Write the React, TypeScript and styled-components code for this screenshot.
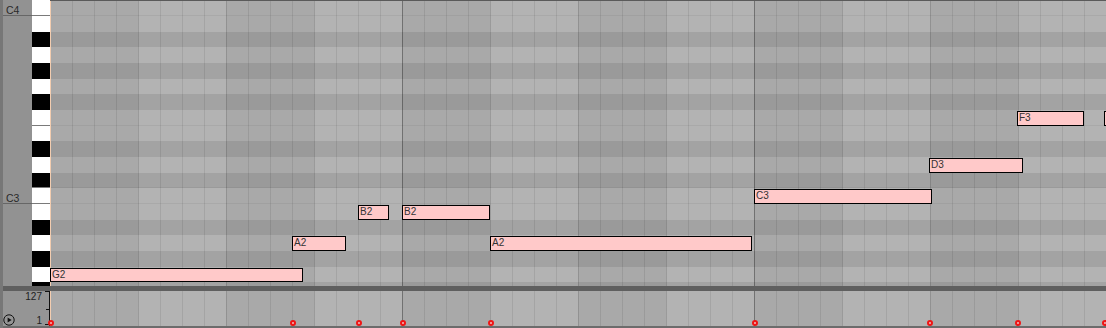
import React from "react";
import styled, { createGlobalStyle, css } from "styled-components";

const GlobalStyle = createGlobalStyle`
  html, body {
    margin: 0;
    padding: 0;
    background: #929292;
  }
  body {
    font-family: "Liberation Sans", Arial, sans-serif;
  }
`;

// rows are 47/3 px tall, snapped to whole pixels (16, 16, 15, ...)
const ROW_TOPS = Array.from({ length: 21 }, (_, i) => Math.round(1 / 3 + (i * 47) / 3));
const rowHeight = (i: number) => ROW_TOPS[i + 1] - ROW_TOPS[i];

const PITCHES = [
  "C4", "B3", "A#3", "A3", "G#3", "G3", "F#3", "F3", "E3",
  "D#3", "D3", "C#3", "C3", "B2", "A#2", "A2", "G#2", "G2", "F#2",
];

type NoteData = { name: string; row: number; x: number; w: number };

const NOTES: NoteData[] = [
  { name: "G2", row: 17, x: 50, w: 253 },
  { name: "A2", row: 15, x: 292, w: 54 },
  { name: "B2", row: 13, x: 358, w: 31 },
  { name: "B2", row: 13, x: 402, w: 88 },
  { name: "A2", row: 15, x: 490, w: 262 },
  { name: "C3", row: 12, x: 754, w: 178 },
  { name: "D3", row: 10, x: 929, w: 94 },
  { name: "F3", row: 7, x: 1017, w: 67 },
  { name: "", row: 7, x: 1104, w: 40 },
];

const GRID_X = 50;

const gridBackground = css`
  background-color: #b3b3b3;
  background-image:
    repeating-linear-gradient(to right, rgba(0, 0, 0, 0.22) 0 1px, transparent 1px 352px),
    repeating-linear-gradient(to right, rgba(0, 0, 0, 0.06) 0 1px, transparent 1px 88px),
    repeating-linear-gradient(to right, rgba(0, 0, 0, 0.085) 0 1px, transparent 1px 22px),
    repeating-linear-gradient(to right, #a9a9a9 0 88px, #b3b3b3 88px 176px);
`;

const Frame = styled.div`
  display: flex;
  width: 1106px;
  height: 328px;
  overflow: hidden;
`;

const Edge = styled.div`
  width: 3px;
  flex-shrink: 0;
  background: #777777;
`;

const Main = styled.div`
  flex: 1;
  display: flex;
  flex-direction: column;
  min-width: 0;
`;

const RollSection = styled.div`
  display: flex;
  height: 286px;
  overflow: hidden;
`;

const Keyboard = styled.div`
  width: 47px;
  flex-shrink: 0;
  display: flex;
  flex-direction: column;
`;

const KeyRow = styled.div<{ $h: number }>`
  display: flex;
  height: ${(p) => p.$h}px;
  flex-shrink: 0;
`;

const PitchLabel = styled.div<{ $line: boolean }>`
  width: 29px;
  display: flex;
  align-items: flex-end;
  padding: 0 0 1px 3px;
  box-sizing: border-box;
  font-size: 10.5px;
  line-height: 10px;
  color: #2a2a2a;
  background: #929292;
  box-shadow: ${(p) => (p.$line ? "inset 0 -1px 0 #666666" : "none")};
`;

const Key = styled.div<{ $black: boolean; $line: boolean }>`
  width: 18px;
  background: ${(p) => (p.$black ? "#000000" : "#ffffff")};
  box-shadow: ${(p) => (p.$line ? "inset 0 -1px 0 #7a7a7a" : "none")};
`;

const Grid = styled.div`
  position: relative;
  flex: 1;
  display: flex;
  flex-direction: column;
  ${gridBackground}

  &::before {
    content: "";
    position: absolute;
    left: 0;
    top: 0;
    bottom: 0;
    width: 1px;
    background: #f3cdb0;
    z-index: 1;
  }

  &::after {
    content: "";
    position: absolute;
    left: 0;
    right: 0;
    top: 0;
    height: 1px;
    background: #5a5a5a;
    z-index: 1;
  }
`;

const LaneRow = styled.div<{ $h: number; $black: boolean; $line: boolean }>`
  height: ${(p) => p.$h}px;
  flex-shrink: 0;
  background: ${(p) => (p.$black ? "rgba(0, 0, 0, 0.085)" : "transparent")};
  box-shadow: ${(p) => (p.$line ? "inset 0 -1px 0 rgba(0, 0, 0, 0.05)" : "none")};
`;

const NoteBox = styled.div`
  position: absolute;
  z-index: 2;
  box-sizing: border-box;
  border: 1px solid #000000;
  background: #ffc9c9;
  padding-left: 1px;
  font-size: 10px;
  line-height: 12px;
  color: #333333;
  white-space: nowrap;
  overflow: hidden;
`;

const Separator = styled.div`
  height: 5px;
  flex-shrink: 0;
  background: #5f5f5f;
`;

const VelocitySection = styled.div`
  display: flex;
  height: 35px;
  flex-shrink: 0;
`;

const VelLabel = styled.div`
  width: 47px;
  flex-shrink: 0;
  display: flex;
  background: #959595;
`;

const PlayIcon = styled.svg`
  align-self: flex-end;
  flex-shrink: 0;
`;

const VelNumbers = styled.div`
  flex: 1;
  display: flex;
  flex-direction: column;
  justify-content: space-between;
  align-items: flex-end;
  padding-top: 1px;
  margin-right: 2px;
  font-size: 10px;
  line-height: 10px;
  color: #1e1e1e;
`;

const VelGrid = styled.div`
  position: relative;
  flex: 1;
  ${gridBackground}

  &::before {
    content: "";
    position: absolute;
    left: 0;
    top: 0;
    bottom: 0;
    width: 1px;
    background: #f3cdb0;
  }
`;

const VelDot = styled.div`
  position: absolute;
  z-index: 3;
  top: 29px;
  width: 6px;
  height: 6px;
  box-sizing: border-box;
  border-radius: 50%;
  border: 2px solid #f01414;
  background: #f0bcbc;
`;

const BottomBar = styled.div`
  height: 2px;
  flex-shrink: 0;
  background: #6c6c6c;
`;

const isBlack = (p: string) => p.includes("#");
const hasLine = (p: string) => p.startsWith("C") || p.startsWith("F") && !p.startsWith("F#");

const App: React.FC = () => {
  return (
    <>
      <GlobalStyle />
      <Frame>
        <Edge />
        <Main>
          <RollSection>
            <Keyboard>
              {PITCHES.map((p, i) => (
                <KeyRow key={p} $h={rowHeight(i)}>
                  <PitchLabel $line={p.startsWith("C") && !isBlack(p)}>
                    {p === "C4" || p === "C3" ? p : ""}
                  </PitchLabel>
                  <Key $black={isBlack(p)} $line={hasLine(p)} />
                </KeyRow>
              ))}
            </Keyboard>
            <Grid>
              {PITCHES.map((p, i) => (
                <LaneRow key={p} $h={rowHeight(i)} $black={isBlack(p)} $line={hasLine(p)} />
              ))}
              {NOTES.map((n, i) => (
                <NoteBox
                  key={i}
                  style={{
                    left: n.x - GRID_X,
                    top: ROW_TOPS[n.row] + 1,
                    width: n.w,
                    height: rowHeight(n.row) - 1,
                  }}
                >
                  {n.name}
                </NoteBox>
              ))}
            </Grid>
          </RollSection>
          <Separator />
          <VelocitySection>
            <VelLabel>
              <PlayIcon width="12" height="12" viewBox="0 0 12 12">
                <circle cx="6" cy="6" r="5.2" fill="none" stroke="#111" strokeWidth="1" />
                <polygon points="4.6,3.4 8.6,6 4.6,8.6" fill="#111" />
              </PlayIcon>
              <VelNumbers>
                <span>127</span>
                <span>1</span>
              </VelNumbers>
              <svg width="6" height="35" viewBox="0 0 6 35">
                <line x1="5.5" y1="0" x2="5.5" y2="35" stroke="#111" strokeWidth="1" />
                <line x1="1" y1="0.5" x2="6" y2="0.5" stroke="#111" strokeWidth="1" />
                <line x1="2" y1="18.5" x2="6" y2="18.5" stroke="#111" strokeWidth="1" />
                <line x1="1" y1="33.5" x2="6" y2="33.5" stroke="#111" strokeWidth="1" />
              </svg>
            </VelLabel>
            <VelGrid>
              {NOTES.map((n, i) => (
                <VelDot key={i} style={{ left: n.x - GRID_X - 2 }} />
              ))}
            </VelGrid>
          </VelocitySection>
          <BottomBar />
        </Main>
      </Frame>
    </>
  );
};

export default App;
